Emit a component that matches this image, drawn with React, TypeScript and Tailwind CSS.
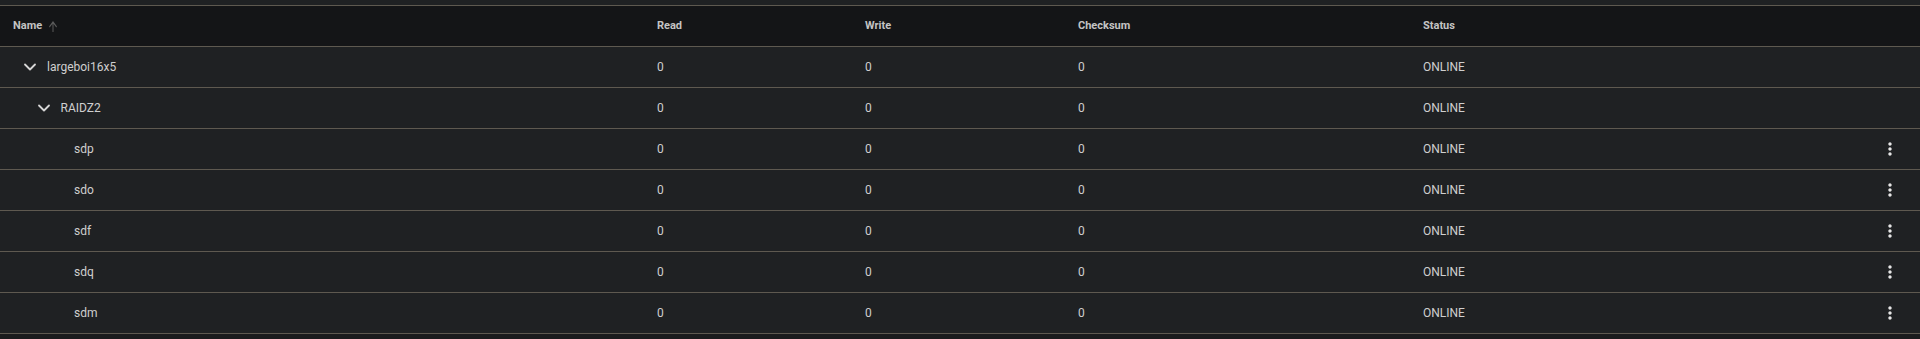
import { ChevronDown } from "lucide-react";

type Row = {
  name: string;
  level: number;
  expandable: boolean;
  read: number;
  write: number;
  checksum: number;
  status: string;
};

const rows: Row[] = [
  { name: "largeboi16x5", level: 0, expandable: true, read: 0, write: 0, checksum: 0, status: "ONLINE" },
  { name: "RAIDZ2", level: 1, expandable: true, read: 0, write: 0, checksum: 0, status: "ONLINE" },
  { name: "sdp", level: 2, expandable: false, read: 0, write: 0, checksum: 0, status: "ONLINE" },
  { name: "sdo", level: 2, expandable: false, read: 0, write: 0, checksum: 0, status: "ONLINE" },
  { name: "sdf", level: 2, expandable: false, read: 0, write: 0, checksum: 0, status: "ONLINE" },
  { name: "sdq", level: 2, expandable: false, read: 0, write: 0, checksum: 0, status: "ONLINE" },
  { name: "sdm", level: 2, expandable: false, read: 0, write: 0, checksum: 0, status: "ONLINE" },
];

const cols = "grid grid-cols-[644px_208px_213px_345px_1fr_60px] items-center";

function MoreVert() {
  return (
    <svg width="20" height="20" viewBox="0 0 24 24" fill="#e6e6e6">
      <path d="M12 8c1.1 0 2-.9 2-2s-.9-2-2-2-2 .9-2 2 .9 2 2 2zm0 2c-1.1 0-2 .9-2 2s.9 2 2 2 2-.9 2-2-.9-2-2-2zm0 6c-1.1 0-2 .9-2 2s.9 2 2 2 2-.9 2-2-.9-2-2-2z" />
    </svg>
  );
}

function SortArrow() {
  return (
    <svg width="8" height="11" viewBox="4 4 16 16" preserveAspectRatio="none" fill="#5b5b5b">
      <path d="M4 12l1.41 1.41L11 7.83V20h2V7.83l5.58 5.59L20 12l-8-8-8 8z" />
    </svg>
  );
}

export default function App() {
  return (
    <div className="min-h-[339px] bg-[#1a1b1d] font-['Roboto',sans-serif] text-[#cfcfcf]">
      {/* tail of the row above, cut off by the screenshot */}
      <div className="h-[5px] bg-[#1f2123]" />

      <div className={`${cols} h-[42px] border-y border-[#5e5950] bg-[#141517] text-[11px] font-bold text-[#c4c4c4]`}>
        <div className="flex items-center gap-[7px] pl-[13px]">
          <span>Name</span>
          <SortArrow />
        </div>
        <div className="pl-[13px]">Read</div>
        <div className="pl-[13px]">Write</div>
        <div className="pl-[13px]">Checksum</div>
        <div className="pl-[13px]">Status</div>
        <div />
      </div>

      {rows.map((row) => (
        <div
          key={row.name}
          className={`${cols} h-[41px] border-b border-[#5e5950] bg-[#1f2123] text-[12px]`}
        >
          <div className="flex items-center pl-[20px]">
            <div style={{ width: row.level * 13.5 }} />
            <div className="flex h-5 w-5 items-center justify-center">
              {row.expandable && <ChevronDown size={20} strokeWidth={2.2} color="#d6d6d6" />}
            </div>
            <span className="ml-[7px]">{row.name}</span>
          </div>
          <div className="pl-[13px]">{row.read}</div>
          <div className="pl-[13px]">{row.write}</div>
          <div className="pl-[13px]">{row.checksum}</div>
          <div className="pl-[13px]">{row.status}</div>
          <div className="flex justify-end pr-[20px]">{!row.expandable && <MoreVert />}</div>
        </div>
      ))}
    </div>
  );
}
